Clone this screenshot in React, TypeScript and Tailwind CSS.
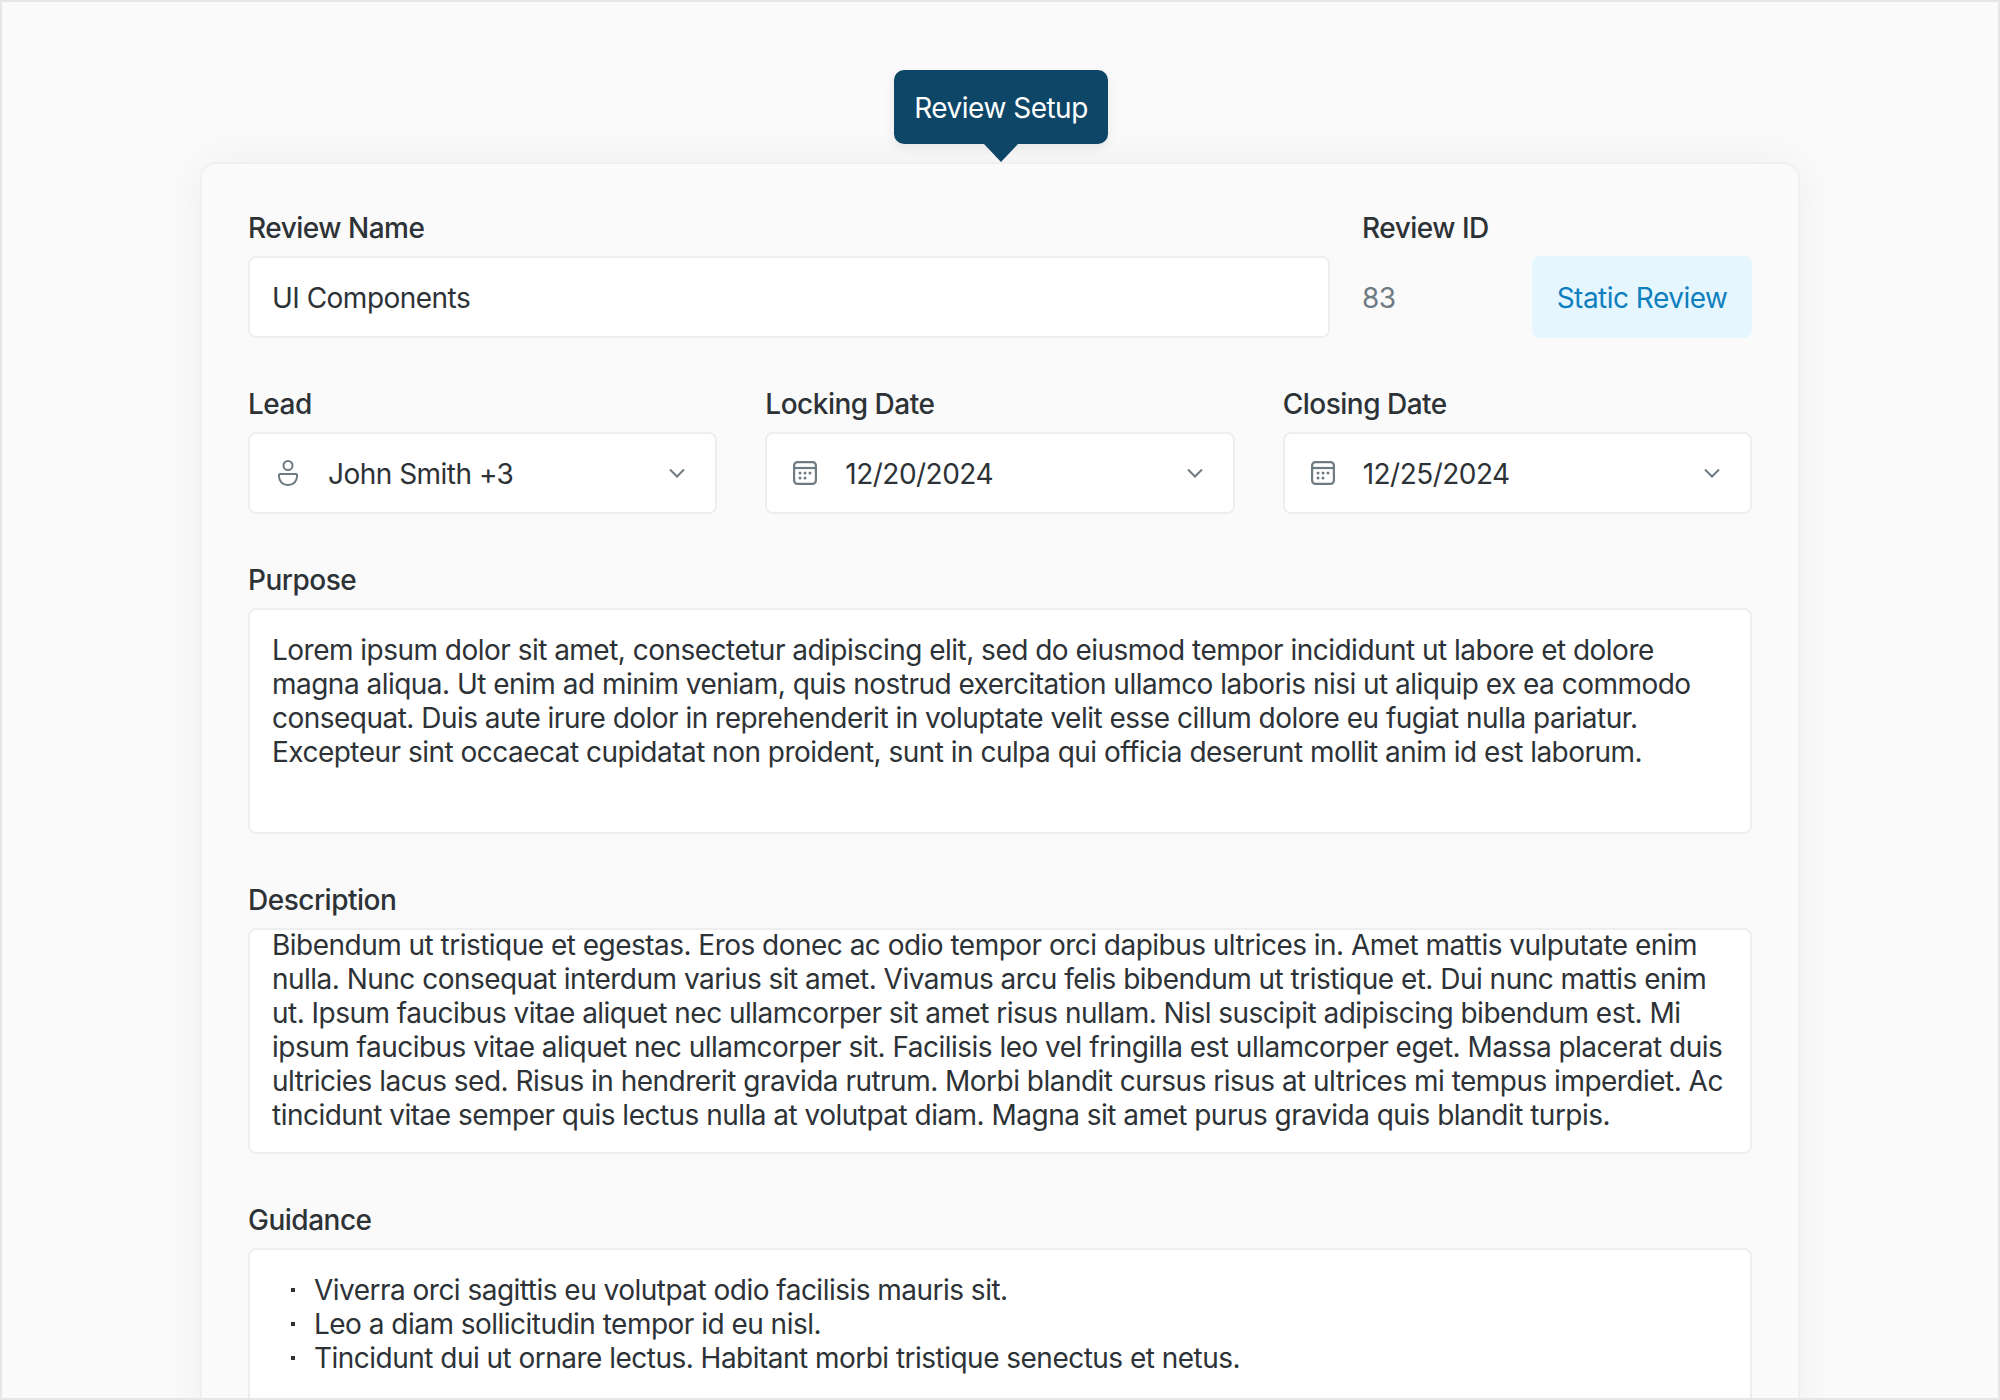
const font = { fontFamily: "Inter, 'Noto Sans', sans-serif" };

function UserIcon() {
  return (
    <svg width="20" height="26" viewBox="0 0 20 26" fill="none" stroke="#6f7b83" strokeWidth="2">
      <circle cx="10" cy="5.5" r="4.5" />
      <path d="M2 14h16a1 1 0 0 1 1 1v1.5a8.5 8.5 0 0 1-8.5 8.5h-1a8.5 8.5 0 0 1-8.5-8.5v-1.5a1 1 0 0 1 1-1z" />
    </svg>
  );
}

function CalendarIcon() {
  return (
    <svg width="24" height="24" viewBox="0 0 24 24" fill="none" stroke="#6f7b83" strokeWidth="2.2">
      <rect x="1.1" y="1.1" width="21.8" height="21.8" rx="3.5" />
      <path d="M1 7h22" />
      <g fill="#6f7b83" stroke="none">
        <circle cx="7" cy="12" r="1.5" />
        <circle cx="12" cy="12" r="1.5" />
        <circle cx="17" cy="12" r="1.5" />
        <circle cx="7" cy="17" r="1.5" />
        <circle cx="12" cy="17" r="1.5" />
      </g>
    </svg>
  );
}

function Chevron() {
  return (
    <svg width="16" height="10" viewBox="0 0 16 10" fill="none" stroke="#6f7b83" strokeWidth="2">
      <path d="M1 1.5l7 7 7-7" />
    </svg>
  );
}

function Label({ children }: { children: React.ReactNode }) {
  return <div className="h-[34px] mb-[11px] text-[28px] leading-[34px] font-medium text-[#2d3236] tracking-[-0.5px]">{children}</div>;
}

function SelectField({ label, icon, value }: { label: string; icon: React.ReactNode; value: string }) {
  return (
    <div className="flex-1">
      <Label>{label}</Label>
      <div className="h-[82px] flex items-center bg-white border-2 border-[#eeeeee] rounded-[8px] pl-[26px] pr-[30px]">
        <div className="w-[52px] flex items-center">{icon}</div>
        <span className="flex-1 pt-[2px] text-[#2d3236]">{value}</span>
        <Chevron />
      </div>
    </div>
  );
}

const purpose = [
  "Lorem ipsum dolor sit amet, consectetur adipiscing elit, sed do eiusmod tempor incididunt ut labore et dolore",
  "magna aliqua. Ut enim ad minim veniam, quis nostrud exercitation ullamco laboris nisi ut aliquip ex ea commodo",
  "consequat. Duis aute irure dolor in reprehenderit in voluptate velit esse cillum dolore eu fugiat nulla pariatur.",
  "Excepteur sint occaecat cupidatat non proident, sunt in culpa qui officia deserunt mollit anim id est laborum.",
];

const description = [
  "Bibendum ut tristique et egestas. Eros donec ac odio tempor orci dapibus ultrices in. Amet mattis vulputate enim",
  "nulla. Nunc consequat interdum varius sit amet. Vivamus arcu felis bibendum ut tristique et. Dui nunc mattis enim",
  "ut. Ipsum faucibus vitae aliquet nec ullamcorper sit amet risus nullam. Nisl suscipit adipiscing bibendum est. Mi",
  "ipsum faucibus vitae aliquet nec ullamcorper sit. Facilisis leo vel fringilla est ullamcorper eget. Massa placerat duis",
  "ultricies lacus sed. Risus in hendrerit gravida rutrum. Morbi blandit cursus risus at ultrices mi tempus imperdiet. Ac",
  "tincidunt vitae semper quis lectus nulla at volutpat diam. Magna sit amet purus gravida quis blandit turpis.",
];

const guidance = [
  "Viverra orci sagittis eu volutpat odio facilisis mauris sit.",
  "Leo a diam sollicitudin tempor id eu nisl.",
  "Tincidunt dui ut ornare lectus. Habitant morbi tristique senectus et netus.",
];

export default function App() {
  return (
    <div style={font} className="relative h-[1400px] w-[2000px] overflow-hidden border-2 border-[#e6e6e6] bg-[#fafafa] text-[28px] leading-[34px] tracking-[-0.52px]">
      <div className="flex justify-center pt-[68px]">
        <div className="relative z-10 ml-[2px] h-[74px] w-[214px] pt-[2px] flex items-center justify-center rounded-[10px] bg-[#0d4667] text-white shadow-[0_4px_12px_rgba(0,0,0,0.08)] tracking-[-0.5px]">
          Review Setup
          <div className="absolute left-[90px] top-[74px] h-0 w-0 border-x-[17px] border-t-[18px] border-x-transparent border-t-[#0d4667]" />
        </div>
      </div>

      <div className="mx-auto mt-[18px] h-[1400px] w-[1600px] rounded-[16px] border-2 border-[#f0f0f0] bg-[#fafafa] px-[46px] pt-[47px] shadow-[0_0_40px_rgba(0,0,0,0.05)]">
        <div className="flex flex-col gap-[49px]">
          {/* Name row */}
          <div className="flex">
            <div className="w-[1082px]">
              <Label>Review Name</Label>
              <div className="h-[82px] flex items-center bg-white border-2 border-[#eeeeee] rounded-[8px] px-[22px] pt-[2px] text-[#2d3236]">UI Components</div>
            </div>
            <div className="ml-[32px] flex-1">
              <Label>Review ID</Label>
              <div className="h-[82px] flex items-center justify-between">
                <span className="pt-[2px] text-[#6f7b83]">83</span>
                <span className="h-[82px] w-[220px] pt-[2px] flex items-center justify-center rounded-[8px] bg-[#e5f6fe] text-[#0e7fbe]">Static Review</span>
              </div>
            </div>
          </div>

          {/* Lead and dates */}
          <div className="flex gap-[48px]">
            <SelectField label="Lead" icon={<div className="ml-[2px]"><UserIcon /></div>} value="John Smith +3" />
            <SelectField label="Locking Date" icon={<CalendarIcon />} value="12/20/2024" />
            <SelectField label="Closing Date" icon={<CalendarIcon />} value="12/25/2024" />
          </div>

          <div>
            <Label>Purpose</Label>
            <div className="h-[226px] bg-white border-2 border-[#eeeeee] rounded-[8px] px-[22px] pt-[23px] text-[#2d3236] whitespace-nowrap">
              {purpose.map((line) => (
                <div key={line}>{line}</div>
              ))}
            </div>
          </div>

          <div>
            <Label>Description</Label>
            <div className="h-[226px] overflow-hidden bg-white border-2 border-[#eeeeee] rounded-[8px] px-[22px] text-[#2d3236] whitespace-nowrap">
              <div className="-mt-[2px]">
                {description.map((line) => (
                  <div key={line}>{line}</div>
                ))}
              </div>
            </div>
          </div>

          <div>
            <Label>Guidance</Label>
            <div className="h-[226px] bg-white border-2 border-[#eeeeee] rounded-[8px] px-[22px] pt-[23px] text-[#2d3236] whitespace-nowrap">
              {guidance.map((line) => (
                <div key={line} className="flex items-center">
                  <span className="ml-[19px] mr-[19px] h-[4px] w-[4px] bg-[#2d3236]" />
                  {line}
                </div>
              ))}
            </div>
          </div>
        </div>
      </div>
    </div>
  );
}
